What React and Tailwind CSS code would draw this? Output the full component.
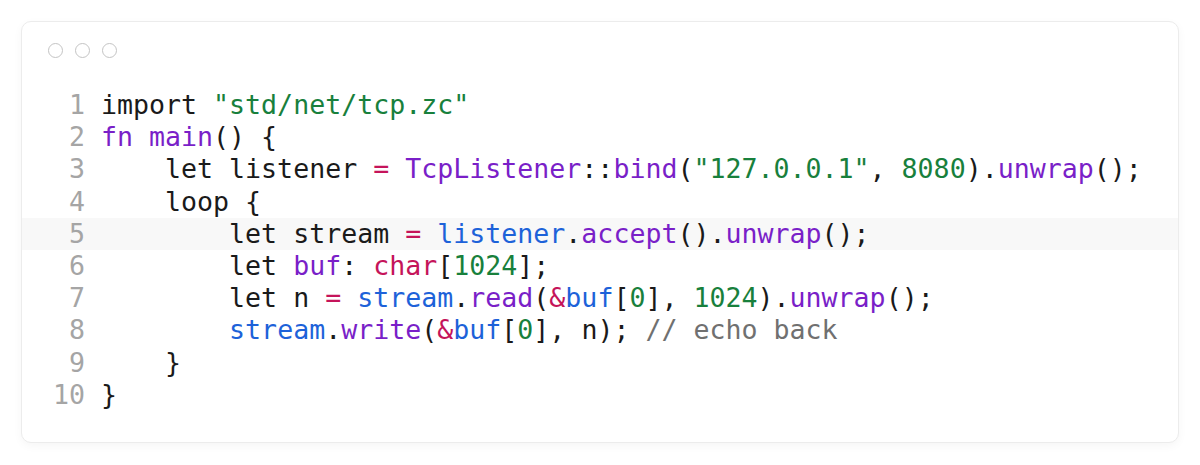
import React from 'react';

const C = {
  d: 'text-[#1a1a1a]',
  p: 'text-[#7a1fc8]',
  b: 'text-[#1d62d9]',
  r: 'text-[#c5145a]',
  g: 'text-[#18803c]',
  c: 'text-[#707070]',
};

// each line: list of [colorKey, text]
const lines = [
  [['d', 'import '], ['g', '"std/net/tcp.zc"']],
  [['p', 'fn main'], ['d', '() {']],
  [
    ['d', '    let listener '],
    ['r', '='],
    ['d', ' '],
    ['p', 'TcpListener'],
    ['d', '::'],
    ['p', 'bind'],
    ['d', '('],
    ['g', '"127.0.0.1"'],
    ['d', ', '],
    ['g', '8080'],
    ['d', ').'],
    ['p', 'unwrap'],
    ['d', '();'],
  ],
  [['d', '    loop {']],
  [
    ['d', '        let stream '],
    ['r', '='],
    ['d', ' '],
    ['b', 'listener'],
    ['d', '.'],
    ['p', 'accept'],
    ['d', '().'],
    ['p', 'unwrap'],
    ['d', '();'],
  ],
  [
    ['d', '        let '],
    ['p', 'buf'],
    ['d', ': '],
    ['r', 'char'],
    ['d', '['],
    ['g', '1024'],
    ['d', '];'],
  ],
  [
    ['d', '        let n '],
    ['r', '='],
    ['d', ' '],
    ['b', 'stream'],
    ['d', '.'],
    ['p', 'read'],
    ['d', '('],
    ['r', '&'],
    ['b', 'buf'],
    ['d', '['],
    ['g', '0'],
    ['d', '], '],
    ['g', '1024'],
    ['d', ').'],
    ['p', 'unwrap'],
    ['d', '();'],
  ],
  [
    ['d', '        '],
    ['b', 'stream'],
    ['d', '.'],
    ['p', 'write'],
    ['d', '('],
    ['r', '&'],
    ['b', 'buf'],
    ['d', '['],
    ['g', '0'],
    ['d', '], n); '],
    ['c', '// echo back'],
  ],
  [['d', '    }']],
  [['d', '}']],
];

export default function App() {
  return (
    <div className="w-[1200px] h-[465px] bg-white p-[21px]">
      <div className="h-[422px] rounded-[10px] border border-[#ececec] bg-white shadow-[0_3px_10px_rgba(0,0,0,0.04)] pt-[21px]">
        {/* window dots */}
        <div className="flex gap-[12px] pl-[26px]">
          <span className="w-[15px] h-[15px] rounded-full border-[1.5px] border-[#c4c4c4]" />
          <span className="w-[15px] h-[15px] rounded-full border-[1.5px] border-[#c4c4c4]" />
          <span className="w-[15px] h-[15px] rounded-full border-[1.5px] border-[#c4c4c4]" />
        </div>

        {/* code */}
        <div
          className="mt-[31px] text-[26.6px] leading-[32.2px] whitespace-pre"
          style={{ fontFamily: '"DejaVu Sans Mono", "Liberation Mono", monospace' }}
        >
          {lines.map((tokens, i) => (
            <div
              key={i}
              className={`flex h-[32.2px] pl-[31px] ${i === 4 ? 'bg-[#f8f8f8]' : ''}`}
            >
              <span className="w-[32px] text-right text-[#a5a5a5]">{i + 1}</span>
              <span className="ml-[16px]">
                {tokens.map(([k, t], j) => (
                  <span key={j} className={C[k]}>
                    {t}
                  </span>
                ))}
              </span>
            </div>
          ))}
        </div>
      </div>
    </div>
  );
}
